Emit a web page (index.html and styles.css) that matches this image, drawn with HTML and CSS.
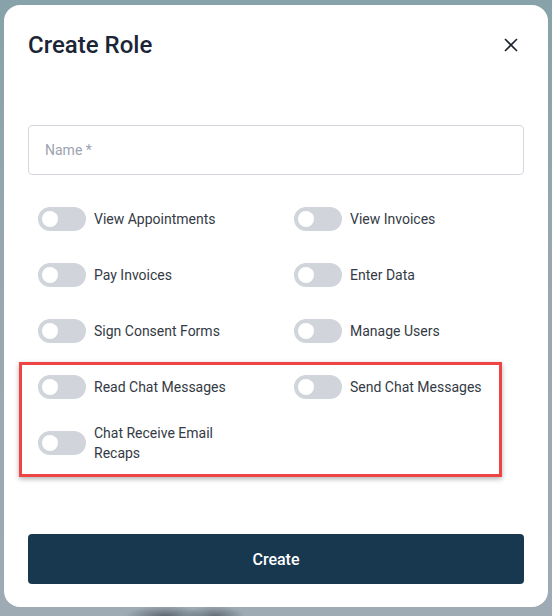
FILE: index.html
```html
<!DOCTYPE html>
<html lang="en">
<head>
<meta charset="utf-8">
<title>Create Role</title>
<link rel="stylesheet" href="styles.css">
</head>
<body>
<div class="backdrop">
  <div class="modal">
    <div class="header">
      <h2 class="title">Create Role</h2>
      <button class="close" aria-label="Close">
        <svg width="14" height="14" viewBox="0 0 14 14"><path d="M1 1L13 13M13 1L1 13" stroke="#1f2430" stroke-width="1.7" fill="none"/></svg>
      </button>
    </div>
    <div class="field"><span class="placeholder">Name *</span></div>
    <div class="grid">
      <label class="item"><span class="toggle"><span class="knob"></span></span><span class="label">View Appointments</span></label>
      <label class="item"><span class="toggle"><span class="knob"></span></span><span class="label">View Invoices</span></label>
      <label class="item"><span class="toggle"><span class="knob"></span></span><span class="label">Pay Invoices</span></label>
      <label class="item"><span class="toggle"><span class="knob"></span></span><span class="label">Enter Data</span></label>
      <label class="item"><span class="toggle"><span class="knob"></span></span><span class="label">Sign Consent Forms</span></label>
      <label class="item"><span class="toggle"><span class="knob"></span></span><span class="label">Manage Users</span></label>
      <label class="item"><span class="toggle"><span class="knob"></span></span><span class="label">Read Chat Messages</span></label>
      <label class="item"><span class="toggle"><span class="knob"></span></span><span class="label">Send Chat Messages</span></label>
      <label class="item"><span class="toggle"><span class="knob"></span></span><span class="label">Chat Receive Email Recaps</span></label>
    </div>
    <button class="submit">Create</button>
    <div class="highlight"></div>
  </div>
</div>
</body>
</html>
```

FILE: styles.css
```css
* { box-sizing: border-box; }

html, body {
  margin: 0;
  padding: 0;
}

body {
  width: 552px;
  height: 616px;
  overflow: hidden;
  font-family: Roboto, "Liberation Sans", Arial, sans-serif;
  background:
    radial-gradient(ellipse 40px 10px at 165px 616px, rgba(40, 50, 60, 0.55), transparent),
    radial-gradient(ellipse 30px 10px at 215px 616px, rgba(40, 50, 60, 0.5), transparent),
    linear-gradient(180deg, #87a2a9 0%, #98a7af 40%, #9eaab4 100%);
}

.backdrop {
  padding: 5px 4px 9px 4px;
}

.modal {
  position: relative;
  width: 544px;
  height: 602px;
  background: #ffffff;
  border-radius: 16px;
  padding: 24px 24px 23px 24px;
  display: flex;
  flex-direction: column;
}

.header {
  display: flex;
  align-items: center;
  justify-content: space-between;
  height: 32px;
}

.title {
  margin: 0;
  font-size: 24px;
  line-height: 32px;
  font-weight: 500;
  color: #1b2536;
}

.close {
  width: 24px;
  height: 24px;
  margin-right: 1px;
  padding: 0;
  border: 0;
  background: transparent;
  display: flex;
  align-items: center;
  justify-content: center;
}

.field {
  margin-top: 64px;
  height: 50px;
  border: 1px solid #d4d8de;
  border-radius: 4px;
  padding: 0 16px;
  display: flex;
  align-items: center;
}

.placeholder {
  font-size: 14px;
  color: #9ca3af;
}

.grid {
  margin-top: 24px;
  display: grid;
  grid-template-columns: 1fr 1fr;
  column-gap: 16px;
  row-gap: 16px;
}

.item {
  display: flex;
  align-items: center;
  min-height: 40px;
  padding: 0 10px;
  gap: 8px;
}

.toggle {
  flex: none;
  position: relative;
  width: 48px;
  height: 24px;
  border-radius: 12px;
  background: #d1d5db;
}

.knob {
  position: absolute;
  top: 4px;
  left: 4px;
  width: 16px;
  height: 16px;
  border-radius: 50%;
  background: #ffffff;
}

.label {
  font-size: 14px;
  line-height: 20px;
  color: #343a44;
}

.submit {
  margin-top: auto;
  height: 50px;
  width: 100%;
  border: 0;
  border-radius: 4px;
  background: #17384f;
  color: #ffffff;
  font-family: Roboto, "Liberation Sans", Arial, sans-serif;
  font-size: 16px;
  font-weight: 500;
}

.highlight {
  position: absolute;
  left: 15px;
  top: 357px;
  width: 483px;
  height: 115px;
  border: 3px solid #ef4444;
  box-shadow: 0 2px 5px rgba(0, 0, 0, 0.3);
  pointer-events: none;
}
```
